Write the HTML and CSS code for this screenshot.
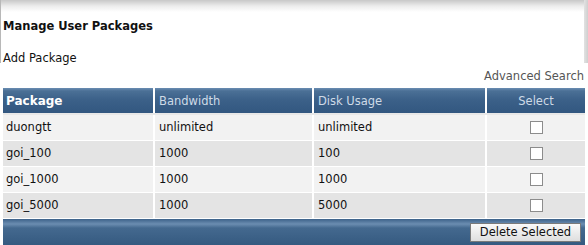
FILE: index.html
```html
<!DOCTYPE html>
<html>
<head>
    <title>Manage User Packages</title>
    <link rel="stylesheet" href="styles.css">
</head>
<body>
    <div class="panel">
        <h1 class="panel-title">Manage User Packages</h1>
        <a class="add-link" href="#">Add Package</a>
    </div>

    <div class="search-row">
        <a class="search-link" href="#">Advanced Search</a>
    </div>

    <table class="packages">
        <thead>
            <tr>
                <th class="col-name main">Package</th>
                <th class="col-bw">Bandwidth</th>
                <th class="col-disk">Disk Usage</th>
                <th class="col-select center">Select</th>
            </tr>
        </thead>
        <tbody>
            <tr>
                <td>duongtt</td>
                <td>unlimited</td>
                <td>unlimited</td>
                <td class="center"><span class="check"></span></td>
            </tr>
            <tr>
                <td>goi_100</td>
                <td>1000</td>
                <td>100</td>
                <td class="center"><span class="check"></span></td>
            </tr>
            <tr>
                <td>goi_1000</td>
                <td>1000</td>
                <td>1000</td>
                <td class="center"><span class="check"></span></td>
            </tr>
            <tr>
                <td>goi_5000</td>
                <td>1000</td>
                <td>5000</td>
                <td class="center"><span class="check"></span></td>
            </tr>
        </tbody>
    </table>

    <div class="table-footer">
        <button class="delete-btn">Delete Selected</button>
    </div>
</body>
</html>
```

FILE: styles.css
```css
* {
    box-sizing: border-box;
}

body {
    margin: 0;
    background: #fff;
    font-family: "DejaVu Sans", Verdana, sans-serif;
    font-size: 11.5px;
    color: #111;
}

a {
    color: inherit;
    text-decoration: none;
}

.panel {
    height: 63px;
    margin-right: 4px;
    padding: 19px 0 0 3px;
    border-left: 1px solid #b8b8b8;
    background: linear-gradient(#c8c8c8 0, #ececec 6px, #fff 12px);
    position: relative;
}

.panel::after {
    content: "";
    position: absolute;
    top: 0;
    right: -4px;
    width: 4px;
    height: 63px;
    background: linear-gradient(90deg, #e2e2e2, #cfcfcf);
}

.panel-title {
    margin: 0 0 18px -1px;
    font-size: 11.5px;
    font-weight: bold;
    line-height: 14px;
    color: #111;
}

.add-link {
    display: block;
    margin-left: -1px;
    line-height: 14px;
}

.search-row {
    height: 25px;
    padding: 6px 4px 0 0;
    text-align: right;
    color: #555;
}

.packages {
    width: 582px;
    margin-left: 3px;
    border-collapse: collapse;
    table-layout: fixed;
}

.packages th,
.packages td {
    height: 26px;
    padding: 0 4px;
    text-align: left;
    border-left: 2px solid #fff;
    border-bottom: 1px solid #fff;
}

.packages th:first-child,
.packages td:first-child {
    border-left: none;
    padding-left: 3px;
}

.packages th {
    font-weight: normal;
    color: #cfdbe7;
    background: linear-gradient(#6a8db2 0, #4b7096 3px, #3c6189 45%, #325780 100%);
    border-bottom: 2px solid #e8e8e8;
}

.packages th.main {
    font-weight: bold;
    color: #fff;
    font-size: 12px;
}

.col-name { width: 151px; }
.col-bw { width: 159px; }
.col-disk { width: 173px; }
.col-select { width: 99px; }

.packages .center {
    text-align: center;
}

.packages tbody tr:nth-child(odd) td {
    background: #f2f2f2;
}

.packages tbody tr:nth-child(even) td {
    background: #e4e4e4;
}

.check {
    display: inline-block;
    width: 13px;
    height: 13px;
    vertical-align: middle;
    border: 1px solid #8c8c8c;
    background: #fff;
}

.table-footer {
    width: 582px;
    height: 27px;
    margin: 0 0 0 3px;
    padding: 4px 4px 0 0;
    text-align: right;
    background: linear-gradient(#3d6289 0, #6b8db1 5px, #44698f 9px, #34597f 100%);
}

.delete-btn {
    width: 111px;
    height: 19px;
    padding: 0;
    font-family: "DejaVu Sans", Verdana, sans-serif;
    font-size: 11.5px;
    color: #111;
    border: 1px solid #7a7a7a;
    background: linear-gradient(#fafafa, #dedede);
}
```
